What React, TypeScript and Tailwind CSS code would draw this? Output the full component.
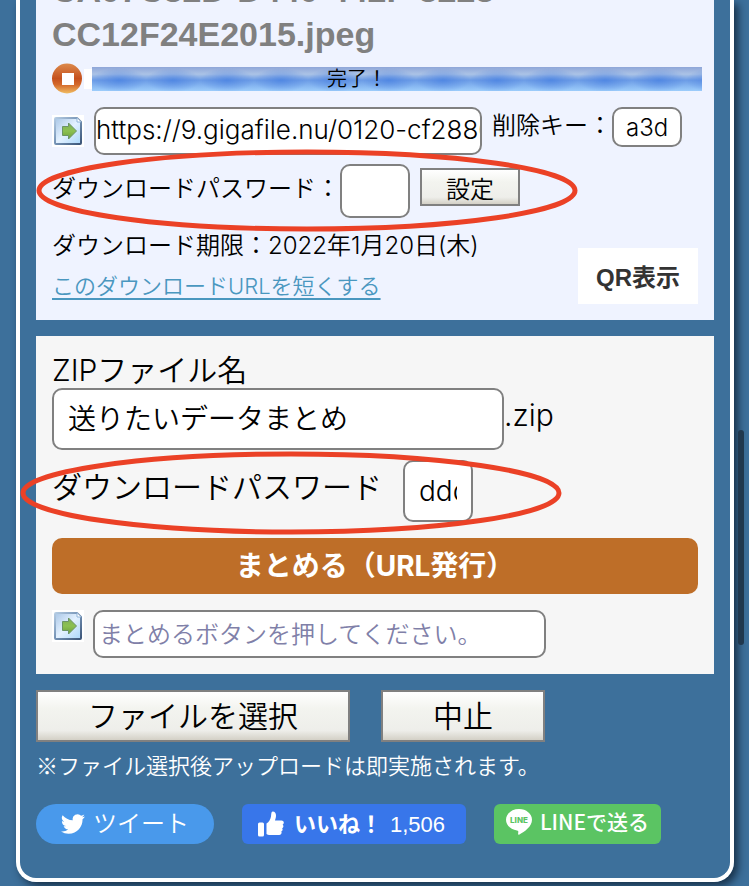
import React, { useState } from 'react';

const SaveIcon: React.FC = () => (
  <svg viewBox="0 0 32 32" className="h-8 w-8 shrink-0" aria-hidden="true">
    <defs>
      <linearGradient id="page" x1="0" y1="0" x2="1" y2="1">
        <stop offset="0" stopColor="#a9c6e6" />
        <stop offset="0.5" stopColor="#e3f1ff" />
        <stop offset="1" stopColor="#a9d6fb" />
      </linearGradient>
      <linearGradient id="pageEdge" x1="0" y1="0" x2="1" y2="1">
        <stop offset="0" stopColor="#b4cbe2" />
        <stop offset="0.5" stopColor="#7391b4" />
        <stop offset="1" stopColor="#3c5578" />
      </linearGradient>
      <linearGradient id="arrow" x1="0" y1="0" x2="0" y2="1">
        <stop offset="0" stopColor="#7fae56" />
        <stop offset="0.5" stopColor="#8cc152" />
        <stop offset="1" stopColor="#6d9f3b" />
      </linearGradient>
    </defs>
    <rect width="32" height="32" fill="#fff" />
    <path d="M4 3h21l4 4v21q0 1-1 1H4q-1 0-1-1V4q0-1 1-1z" fill="url(#page)" stroke="url(#pageEdge)" strokeWidth="2" strokeLinejoin="round" />
    <path d="M25 3v4h4" fill="#fff" stroke="#8fb4da" />
    <path d="M10.5 11.5h6V8l8 8-8 8v-3.500h-6z" fill="url(#arrow)" stroke="#6b9465" strokeLinejoin="round" />
  </svg>
);

const StopIcon: React.FC = () => (
  <svg viewBox="0 0 32 32" className="h-8 w-8" aria-hidden="true">
    <defs>
      <linearGradient id="stop" x1="0" y1="0" x2="0" y2="1">
        <stop offset="0" stopColor="#dc8a4c" />
        <stop offset="0.5" stopColor="#c5501d" />
        <stop offset="0.7" stopColor="#d4682a" />
        <stop offset="1" stopColor="#f0bd62" />
      </linearGradient>
    </defs>
    <circle cx="15" cy="15.500" r="15" fill="url(#stop)" />
    <rect x="10" y="10" width="12" height="12" fill="#fff" />
  </svg>
);

const TwitterIcon: React.FC = () => (
  <svg viewBox="0 0 24 24" className="h-6 w-6" fill="currentColor" aria-hidden="true">
    <path d="M23.95 4.57a10 10 0 0 1-2.82.77 4.96 4.96 0 0 0 2.16-2.72c-.95.55-2 .96-3.13 1.18a4.92 4.92 0 0 0-8.38 4.48C7.69 8.1 4.07 6.13 1.64 3.16a4.92 4.92 0 0 0 1.52 6.57 4.9 4.9 0 0 1-2.23-.61v.06a4.92 4.92 0 0 0 3.95 4.83 5 5 0 0 1-2.21.08 4.94 4.94 0 0 0 4.6 3.42A9.87 9.87 0 0 1 0 19.54a13.99 13.99 0 0 0 7.55 2.21c9.05 0 14-7.5 14-13.98 0-.21 0-.42-.02-.63a9.94 9.94 0 0 0 2.46-2.55z" />
  </svg>
);

const LikeIcon: React.FC = () => (
  <svg viewBox="0 0 26 26" className="h-[26px] w-[26px]" fill="currentColor" aria-hidden="true">
    <rect x="0" y="11.500" width="6" height="14" rx="1.5" />
    <path d="M8.500 12.500C11 11 12.500 8 13 5.500c.3-2 .2-5 1.700-5 2.300 0 3.300 2 3.300 4 0 2-.6 3.500-1 5h6.500c1.500 0 2.300 1 2.300 2.100 0 1-.5 1.700-1.200 2 .5.4.8 1 .8 1.600 0 1-.6 1.700-1.300 2 .3.4.5.8.5 1.400 0 .9-.6 1.600-1.300 1.900.2.300.3.700.3 1.100 0 1.400-1 2.400-2.400 2.400H12c-1.500 0-2.500-.4-3.500-1z" />
  </svg>
);

const LineIcon: React.FC = () => (
  <svg viewBox="0 0 26 26" className="h-[26px] w-[26px]" aria-hidden="true">
    <path d="M13 0C5.800 0 0 4.800 0 10.800c0 5.300 4.700 9.800 11 10.600 1.600.3 1.400 1 1.100 3.300-.1.800.4 1.300 1.300.8C18.500 22.800 26 17.500 26 10.800 26 4.800 20.200 0 13 0z" fill="#fff" />
    <text x="13" y="14" textAnchor="middle" fontSize="8" fontWeight="800" fontFamily="Inter, sans-serif" fill="#5bc463">
      LINE
    </text>
  </svg>
);

const Highlight: React.FC<{ className: string }> = ({ className }) => (
  <svg viewBox="0 0 540 84" preserveAspectRatio="none" className={`pointer-events-none absolute z-10 ${className}`} aria-hidden="true">
    <ellipse cx="270" cy="42" rx="267" ry="39" fill="none" stroke="#eb4126" strokeWidth="5" />
  </svg>
);

const fieldStyle = 'block rounded-[10px] border-2 border-[#808080] bg-white';
const buttonStyle =
  'border-2 border-[#808080] bg-[linear-gradient(to_bottom,#fff_0%,#f3f4ef_35%,#eeeeea_80%,#d3d0c6_100%)] text-black';

const FilePanel: React.FC = () => {
  const [deleteKey, setDeleteKey] = useState('a3d');
  const [password, setPassword] = useState('');

  return (
    <section className="relative h-80 bg-[#eff3ff] px-4 text-2xl">
      <div className="flex h-14 items-end">
        <h2 className="font-['Liberation_Sans',sans-serif] text-[34px] leading-[44px] font-bold text-[#808080]">
          CA07C82D-D440-442F-8228-
          <br />
          CC12F24E2015.jpeg
        </h2>
      </div>
      <div className="mt-[7px] -mr-1 flex items-center">
        <button type="button" aria-label="中止" className="block shrink-0">
          <StopIcon />
        </button>
        <div className="h-5 w-2 bg-white" />
        <div className="flex h-6 flex-1 items-center justify-center bg-[radial-gradient(ellipse_27px_12px_at_50%_55%,#3f7ae099_0%,#4b80df55_50%,#4b80df00_100%),linear-gradient(to_bottom,#8fa6d8_0%,#abc3e6_30%,#6c9ce6_55%,#9dcdfb_100%)] bg-size-[54px_24px,100%_100%] pr-20 text-xl font-[350] text-black">
          完了！
        </div>
      </div>
      <div className="mt-3 flex">
        <div className="flex h-12 items-center">
          <SaveIcon />
        </div>
        <input aria-label="ダウンロードURL" readOnly value="https://9.gigafile.nu/0120-cf2880" className={`${fieldStyle} ml-[10px] h-12 w-[388px] pb-1 text-[26px] font-light`} />
        <label htmlFor="delete-key" className="ml-[10px] leading-[38px] font-[350]">
          削除キー：
        </label>
        <input id="delete-key" value={deleteKey} onChange={(e) => setDeleteKey(e.target.value)} className={`${fieldStyle} h-10 w-[70px] px-3 font-light`} />
      </div>
      <div className="mt-[9px] flex">
        <label htmlFor="file-password" className="leading-[50px] font-[350]">
          ダウンロードパスワード：
        </label>
        <input id="file-password" value={password} onChange={(e) => setPassword(e.target.value)} className={`${fieldStyle} h-[54px] w-[70px] px-3`} />
        <button type="button" className={`${buttonStyle} mt-1 ml-[10px] h-[38px] w-[100px] pt-1 leading-8 font-[350]`}>
          設定
        </button>
      </div>
      <p className="mt-2 leading-10 font-[350]">ダウンロード期限：2022年1月20日(木)</p>
      <a href="#shorten" className="text-[22px] leading-10 font-[350] text-[#4a97bf] underline underline-offset-4">
        このダウンロードURLを短くする
      </a>
      <button type="button" className="absolute right-4 bottom-4 h-14 w-[120px] bg-white pt-1 font-['Liberation_Sans','Noto_Sans_CJK_JP',sans-serif] font-bold text-[#333]">
        QR表示
      </button>
      <Highlight className="top-[149px] left-0 h-[83px] w-[542px]" />
    </section>
  );
};

const ZipPanel: React.FC = () => {
  const [zipName, setZipName] = useState('送りたいデータまとめ');
  const [password, setPassword] = useState('ddd');

  return (
    <section className="relative mt-4 bg-[#f6f6f6] p-4">
      <label htmlFor="zip-name" className="block text-[30px] leading-9 font-[350]">
        ZIPファイル名
      </label>
      <div className="flex">
        <input id="zip-name" value={zipName} onChange={(e) => setZipName(e.target.value)} className={`${fieldStyle} h-[62px] w-[452px] px-[14px] pb-1 text-[28px] font-[350]`} />
        <span className="text-[30px] leading-[54px] font-light">.zip</span>
      </div>
      <div className="mt-[10px] flex justify-between">
        <label htmlFor="zip-password" className="text-[30px] leading-[54px] font-[350]">
          ダウンロードパスワード
        </label>
        <input id="zip-password" value={password} onChange={(e) => setPassword(e.target.value)} className={`${fieldStyle} mr-[225px] h-[62px] w-[70px] px-[14px] text-[28px] font-light`} />
      </div>
      <button type="button" className="mt-4 block h-14 w-full rounded-[10px] bg-[#be6e28] text-[28px] font-bold text-white">
        まとめる（URL発行）
      </button>
      <div className="mt-4 flex">
        <SaveIcon />
        <input aria-label="まとめたURL" readOnly placeholder="まとめるボタンを押してください。" className={`${fieldStyle} ml-[9px] h-12 w-[453px] px-1 text-2xl font-[350] placeholder:text-[#8080a8]`} />
      </div>
      <Highlight className="top-[115px] -left-4 h-[84px] w-[542px]" />
    </section>
  );
};

export default function App() {
  return (
    <main className="bg-[#3d709b] pr-[15px] pb-1 pl-4 font-['Inter','Noto_Sans_CJK_JP',sans-serif] text-black">
      <div className="h-[882px] overflow-hidden rounded-b-[20px] border-4 border-t-0 border-white px-4 shadow-[4px_4px_8px_#173048]">
        <FilePanel />
        <ZipPanel />
        <div className="mt-4 flex gap-[31px]">
          <button type="button" className={`${buttonStyle} h-[52px] w-[314px] text-[30px] leading-none font-[350]`}>
            ファイルを選択
          </button>
          <button type="button" className={`${buttonStyle} h-[52px] w-[164px] text-[30px] leading-none font-[350]`}>
            中止
          </button>
        </div>
        <p className="mt-1 font-['Noto_Sans_CJK_JP',sans-serif] text-[22px] leading-9 font-[350] text-white">
          ※ファイル選択後アップロードは即実施されます。
        </p>
        <div className="mt-[22px] flex gap-7 text-[22px] text-white">
          <a href="#tweet" className="flex h-10 w-[178px] items-center justify-center gap-2 rounded-full bg-[#4999eb] text-2xl font-[350]">
            <TwitterIcon />
            ツイート
          </a>
          <a href="#like" className="flex h-10 w-56 items-center rounded-md bg-[#3876ea] pl-4 font-bold">
            <LikeIcon />
            <span className="ml-[10px] whitespace-nowrap">いいね！</span>
            <span className="ml-2 font-['Liberation_Sans',sans-serif] font-normal">1,506</span>
          </a>
          <a href="#line" className="flex h-10 w-[167px] items-center justify-center gap-2 rounded-md bg-[#5bc463] pb-1 font-['Noto_Sans_CJK_JP',sans-serif] text-[21px] font-medium whitespace-nowrap">
            <LineIcon />
            LINEで送る
          </a>
        </div>
      </div>
      <div className="fixed top-[430px] right-[5px] h-[215px] w-[6px] rounded-full bg-[#20384e]" />
    </main>
  );
}
